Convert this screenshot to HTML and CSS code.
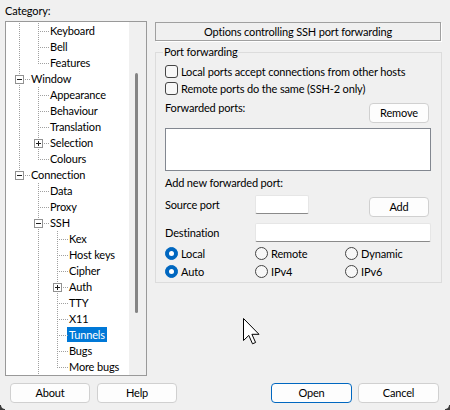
FILE: index.html
```html
<!DOCTYPE html>
<html>
<head>
<meta charset="utf-8">
<link rel="stylesheet" href="styles.css">
</head>
<body>
<div class="app">
  <div class="main">
    <div class="left">
      <div class="cat-label">Category:</div>
      <div class="tree">
        <div class="tree-list">
          <div class="row"><span class="g v"></span><span class="g t"></span><span class="lbl">Keyboard</span></div>
          <div class="row"><span class="g v"></span><span class="g t"></span><span class="lbl">Bell</span></div>
          <div class="row"><span class="g v"></span><span class="g l"></span><span class="lbl">Features</span></div>
          <div class="row"><span class="g t"><span class="exp minus"></span></span><span class="lbl">Window</span></div>
          <div class="row"><span class="g v"></span><span class="g t"></span><span class="lbl">Appearance</span></div>
          <div class="row"><span class="g v"></span><span class="g t"></span><span class="lbl">Behaviour</span></div>
          <div class="row"><span class="g v"></span><span class="g t"></span><span class="lbl">Translation</span></div>
          <div class="row"><span class="g v"></span><span class="g t"><span class="exp plus"></span></span><span class="lbl">Selection</span></div>
          <div class="row"><span class="g v"></span><span class="g l"></span><span class="lbl">Colours</span></div>
          <div class="row"><span class="g l"><span class="exp minus"></span></span><span class="lbl">Connection</span></div>
          <div class="row"><span class="g"></span><span class="g t"></span><span class="lbl">Data</span></div>
          <div class="row"><span class="g"></span><span class="g t"></span><span class="lbl">Proxy</span></div>
          <div class="row"><span class="g"></span><span class="g t"><span class="exp minus"></span></span><span class="lbl">SSH</span></div>
          <div class="row"><span class="g"></span><span class="g v"></span><span class="g t"></span><span class="lbl">Kex</span></div>
          <div class="row"><span class="g"></span><span class="g v"></span><span class="g t"></span><span class="lbl">Host keys</span></div>
          <div class="row"><span class="g"></span><span class="g v"></span><span class="g t"></span><span class="lbl">Cipher</span></div>
          <div class="row"><span class="g"></span><span class="g v"></span><span class="g t"><span class="exp plus"></span></span><span class="lbl">Auth</span></div>
          <div class="row"><span class="g"></span><span class="g v"></span><span class="g t"></span><span class="lbl">TTY</span></div>
          <div class="row"><span class="g"></span><span class="g v"></span><span class="g t"></span><span class="lbl">X11</span></div>
          <div class="row"><span class="g"></span><span class="g v"></span><span class="g t"></span><span class="lbl sel">Tunnels</span></div>
          <div class="row"><span class="g"></span><span class="g v"></span><span class="g t"></span><span class="lbl">Bugs</span></div>
          <div class="row"><span class="g"></span><span class="g v"></span><span class="g l"></span><span class="lbl">More bugs</span></div>
        </div>
        <div class="scrollbar"><div class="thumb"></div></div>
      </div>
    </div>
    <div class="right">
      <div class="title">Options controlling SSH port forwarding</div>
      <fieldset class="group">
        <legend>Port forwarding</legend>
        <div class="cb-row first"><span class="box"></span><span>Local ports accept connections from other hosts</span></div>
        <div class="cb-row"><span class="box"></span><span>Remote ports do the same (SSH-2 only)</span></div>
        <div class="fwd-row"><span class="lab">Forwarded ports:</span><button class="btn small">Remove</button></div>
        <div class="listbox"></div>
        <div class="lab add-lab">Add new forwarded port:</div>
        <div class="src-row">
          <span class="lab field-lab">Source port</span>
          <span class="input src"></span>
          <button class="btn small add">Add</button>
        </div>
        <div class="dst-row">
          <span class="lab field-lab">Destination</span>
          <span class="input dst"></span>
        </div>
        <div class="radios">
          <div class="radio-item"><span class="radio on"></span><span>Local</span></div>
          <div class="radio-item"><span class="radio"></span><span>Remote</span></div>
          <div class="radio-item"><span class="radio"></span><span>Dynamic</span></div>
          <div class="radio-item"><span class="radio on"></span><span>Auto</span></div>
          <div class="radio-item"><span class="radio"></span><span>IPv4</span></div>
          <div class="radio-item"><span class="radio"></span><span>IPv6</span></div>
        </div>
      </fieldset>
    </div>
  </div>
  <div class="buttons">
    <div class="btn-group">
      <button class="btn wide">About</button>
      <button class="btn wide help">Help</button>
    </div>
    <div class="btn-group gap6">
      <button class="btn wide2 default">Open</button>
      <button class="btn wide2">Cancel</button>
    </div>
  </div>
  <svg class="cursor" width="18" height="27" viewBox="0 0 18 27">
    <path d="M0.5 0.5 L0.5 22.5 L5.8 17.4 L9.5 25.8 L12.6 24.5 L8.9 16.3 L16 16.3 Z" fill="#fff" stroke="#000" stroke-width="1" stroke-linejoin="miter"/>
  </svg>
</div>
</body>
</html>
```

FILE: styles.css
```css
* { box-sizing: border-box; }

body {
  margin: 0;
  background: #f0f0f0;
  font-family: Lato, "Noto Sans", sans-serif;
  font-size: 11px;
  letter-spacing: -0.15px;
  color: #000;
}

.app {
  width: 450px;
  height: 410px;
  position: relative;
  overflow: hidden;
}

.app::before, .app::after {
  content: "";
  position: absolute;
  bottom: 0;
  width: 5px;
  height: 5px;
}

.app::before {
  left: 0;
  background: radial-gradient(circle at 100% 0, transparent 3.5px, #3c3c3c 4.5px);
}

.app::after {
  right: 0;
  background: radial-gradient(circle at 0 0, transparent 3.5px, #3c3c3c 4.5px);
}

.main {
  display: flex;
  gap: 8px;
  padding: 4px 0 0 5px;
}

.left { width: 142px; }

.cat-label {
  height: 17px;
  line-height: 14px;
}

.tree {
  height: 355px;
  border: 1px solid #999;
  background: #fff;
  display: flex;
}

.tree-list {
  flex: 1;
  padding: 1px 0 0 5px;
  overflow: hidden;
}

.row {
  display: flex;
  align-items: flex-start;
  height: 16px;
  white-space: nowrap;
}

.g {
  flex: none;
  width: 19px;
  height: 16px;
  position: relative;
}

.v::before, .t::before, .l::before {
  content: "";
  position: absolute;
  left: 8px;
  top: 0;
  width: 1px;
  height: 16px;
  background: repeating-linear-gradient(to bottom, #a0a0a0 0 1px, transparent 1px 2px);
}

.l::before { height: 9px; }

.t::after, .l::after {
  content: "";
  position: absolute;
  left: 9px;
  top: 8px;
  width: 10px;
  height: 1px;
  background: repeating-linear-gradient(to right, transparent 0 1px, #a0a0a0 1px 2px);
}

.exp {
  position: absolute;
  left: 4px;
  top: 4px;
  width: 9px;
  height: 9px;
  border: 1px solid #919191;
  background: #fff;
  z-index: 1;
}

.exp::before {
  content: "";
  position: absolute;
  left: 1px;
  top: 3px;
  width: 5px;
  height: 1px;
  background: #1e1e1e;
}

.plus::after {
  content: "";
  position: absolute;
  left: 3px;
  top: 1px;
  width: 1px;
  height: 5px;
  background: #1e1e1e;
}

.lbl {
  padding: 0 1px;
  line-height: 16px;
}

.lbl.sel {
  background: #0078d7;
  color: #fff;
  padding: 0 2px;
  margin-left: -1px;
  line-height: 15px;
}

.scrollbar {
  width: 17px;
  background: #f0f0f0;
}

.thumb {
  margin: 51px 0 0 6px;
  width: 3px;
  height: 240px;
  background: #858585;
  border-radius: 2px;
}

.right {
  width: 287px;
  padding-top: 18px;
}

.title {
  height: 19px;
  margin-right: 1px;
  border: 1px solid #a0a0a0;
  box-shadow: 1px 1px 0 #fff;
  text-align: center;
  line-height: 17px;
}

.group {
  margin: 4px 0 0;
  padding: 0 10px 2px 9px;
  border: 1px solid #dcdcdc;
  min-width: 0;
}

.group legend {
  padding: 0 1px;
  margin-left: -2px;
  line-height: 14px;
}

.cb-row {
  display: flex;
  align-items: center;
  gap: 3px;
  height: 17px;
  white-space: nowrap;
}

.cb-row.first { margin-top: 4px; }

.box {
  flex: none;
  width: 13px;
  height: 13px;
  border: 1px solid #444;
  border-radius: 3px;
  background: #f7f7f7;
}

.lab { line-height: 14px; }

.fwd-row {
  display: flex;
  justify-content: space-between;
  align-items: flex-start;
  margin-top: 4px;
}

.btn {
  font: inherit;
  letter-spacing: inherit;
  color: #000;
  height: 20px;
  padding: 0;
  border: 1px solid #d0d0d0;
  border-radius: 4px;
  background: #fdfdfd;
  line-height: 18px;
}

.btn.small {
  width: 60px;
  margin-top: 2px;
  margin-right: 2px;
}

.listbox {
  margin-top: 5px;
  height: 43px;
  border: 1px solid #828790;
  background: #fff;
}

.add-lab { margin-top: 5px; }

.src-row {
  display: flex;
  align-items: flex-start;
  margin-top: 5px;
  height: 22px;
}

.field-lab {
  width: 90px;
  margin-top: 3px;
}

.input {
  height: 19px;
  background: #fff;
  border: 1px solid #e6e6e6;
  border-bottom-color: #8a8a8a;
  border-radius: 2px;
}

.input.src { width: 54px; }

.btn.add { margin-left: auto; }

.dst-row {
  display: flex;
  align-items: flex-start;
  margin-top: 6px;
  height: 19px;
}

.input.dst { flex: 1; }

.radios {
  display: grid;
  grid-template-columns: 90px 90px 1fr;
  margin-top: 2px;
}

.radio-item {
  display: flex;
  align-items: center;
  gap: 3px;
  height: 18px;
}

.radio {
  flex: none;
  width: 13px;
  height: 13px;
  border: 1px solid #444;
  border-radius: 50%;
  background: #f7f7f7;
  position: relative;
}

.radio.on {
  background: #0067c0;
  border-color: #0067c0;
}

.radio.on::after {
  content: "";
  position: absolute;
  left: 3px;
  top: 3px;
  width: 5px;
  height: 5px;
  border-radius: 50%;
  background: #fff;
}

.buttons {
  display: flex;
  justify-content: space-between;
  margin-top: 7px;
  padding: 0 11px 0 10px;
}

.btn-group {
  display: flex;
  gap: 7px;
}

.btn-group.gap6 { gap: 6px; }

.btn.wide { width: 80px; }
.btn.wide2 { width: 81px; }

.btn.default { border-color: #0067c0; }

.cursor {
  position: absolute;
  left: 243px;
  top: 318px;
}
```
